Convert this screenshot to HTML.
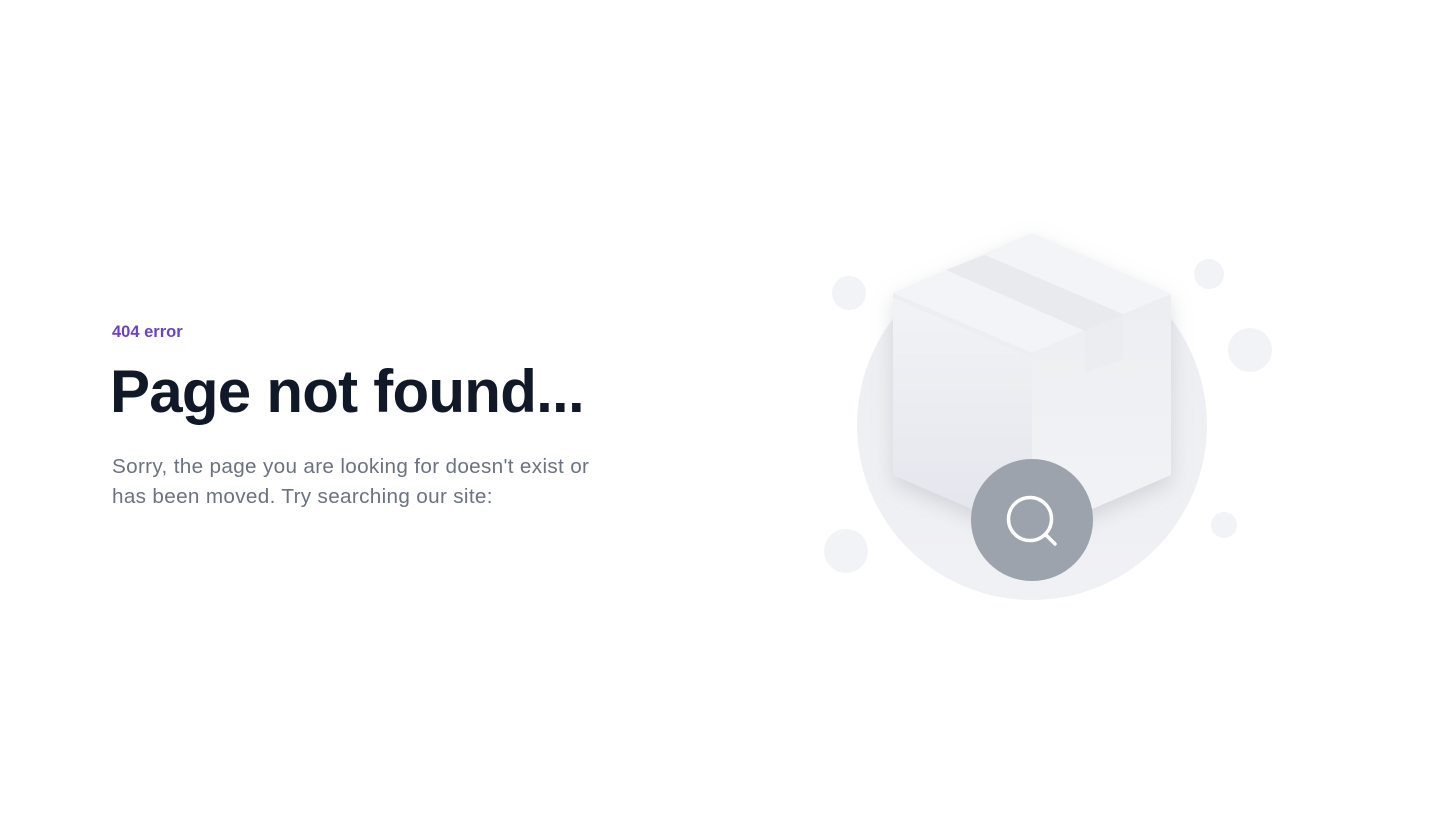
<!DOCTYPE html>
<html><head><meta charset="utf-8"><style>
html,body{margin:0;padding:0;background:#fff;width:1440px;height:832px;overflow:hidden;font-family:"Liberation Sans",sans-serif}
.e{position:absolute;left:112px;top:323px;font-size:16.5px;font-weight:bold;color:#6b3fd1}
h1{position:absolute;left:110px;top:356px;margin:0;font-size:60px;font-weight:bold;color:#111827;letter-spacing:-0.75px;line-height:72px;white-space:nowrap}
p{position:absolute;left:112px;top:452px;margin:0;font-size:20.7px;letter-spacing:0.33px;line-height:30px;color:#6b7280;width:620px;white-space:nowrap}
svg{position:absolute;left:0;top:0}
</style></head><body>
<div class="e">404 error</div>
<h1>Page not found...</h1>
<p>Sorry, the page you are looking for doesn't exist or<br>has been moved. Try searching our site:</p>
<svg width="1440" height="832">
<defs>
<linearGradient id="bg" x1="0" y1="0" x2="0" y2="1"><stop offset="0" stop-color="#eceef1"/><stop offset="1" stop-color="#f0f1f4"/></linearGradient>
<linearGradient id="lf" x1="0" y1="0" x2="0" y2="1"><stop offset="0" stop-color="#f2f3f6"/><stop offset="1" stop-color="#e2e5ec"/></linearGradient>
<linearGradient id="rf" x1="0" y1="0" x2="0" y2="1"><stop offset="0" stop-color="#eceef1"/><stop offset="1" stop-color="#f2f3f6"/></linearGradient>
<filter id="sh" x="-20%" y="-20%" width="140%" height="140%"><feDropShadow dx="0" dy="8" stdDeviation="10" flood-color="#9ca3af" flood-opacity="0.35"/></filter>
</defs>
<circle cx="1032" cy="425" r="175" fill="url(#bg)"/>
<circle cx="849" cy="293" r="17" fill="#f2f3f6"/>
<circle cx="1209" cy="274" r="15" fill="#f2f3f6"/>
<circle cx="1250" cy="350" r="22" fill="#f2f3f6"/>
<circle cx="1224" cy="525" r="13" fill="#f2f3f6"/>
<circle cx="846" cy="551" r="22" fill="#f2f3f6"/>
<g filter="url(#sh)">
<polygon points="893,293 1032,353 1032,535 893,475" fill="url(#lf)"/>
<polygon points="1032,353 1171,294 1171,475 1032,535" fill="url(#rf)"/>
<polygon points="893,293 1032,233 1171,294 1032,353" fill="#f3f4f7"/>
</g>
<polygon points="946,270 985,255 1123,314 1085,331" fill="#e9eaee"/>
<polygon points="1085,331 1123,314 1123,360 1085,372" fill="#e9ebef" opacity="0.6"/>
<polygon points="893,293 1032,353 1032,358 893,298" fill="#eceef2"/>
<circle cx="1032" cy="520" r="61" fill="#9ca3ad"/>
<circle cx="1030" cy="519" r="21.5" fill="none" stroke="#fff" stroke-width="3.5"/>
<line x1="1046" y1="535" x2="1055" y2="544" stroke="#fff" stroke-width="3.5" stroke-linecap="round"/>
</svg>
</body></html>
